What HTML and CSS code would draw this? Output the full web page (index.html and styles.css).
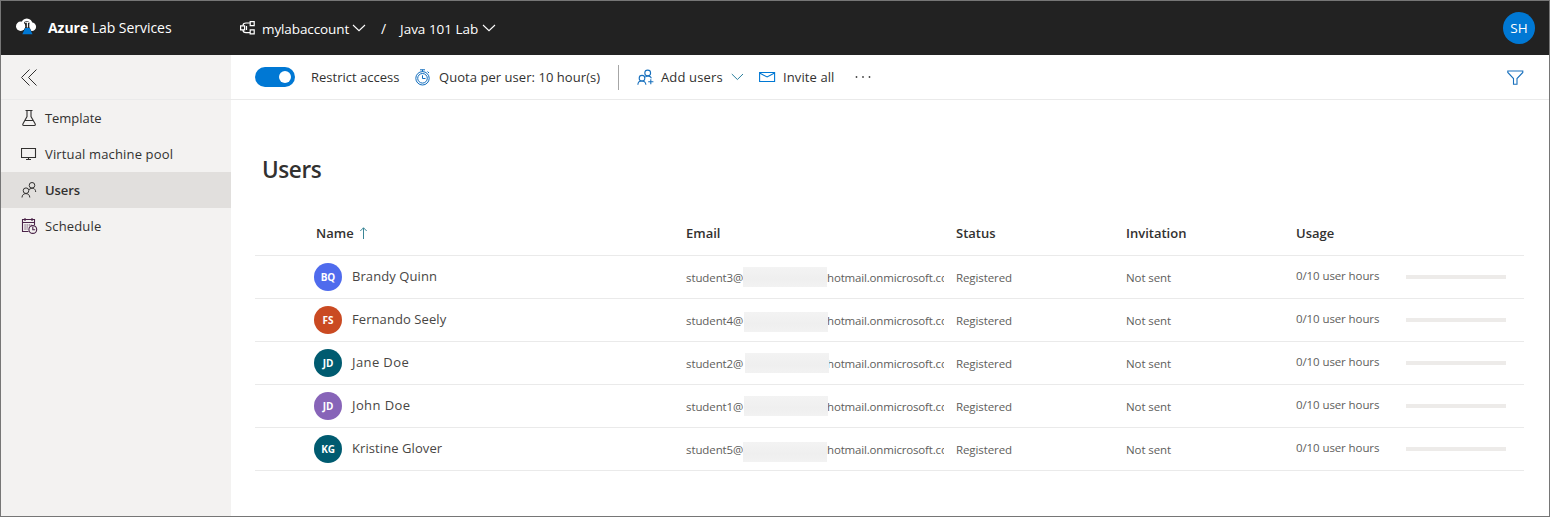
FILE: index.html
```html
<!DOCTYPE html>
<html lang="en">
<head>
<meta charset="utf-8">
<title>Azure Lab Services</title>
<link rel="stylesheet" href="styles.css">
</head>
<body>
<div class="app">
  <header class="topbar">
    <svg class="logo" width="21" height="17" viewBox="0 0 21 17">
      <circle cx="4.700" cy="8.300" r="4.700" fill="#fff"/>
      <circle cx="15.800" cy="8.800" r="4.300" fill="#fff"/>
      <path d="M6.500 6.500C6.500.2 15 .2 15.500 6.500" fill="none" stroke="#fff" stroke-width="2.600"/>
      <path d="M9.500 4.500h3.800V9l3.600 7H6l3.500-7z" fill="#222"/>
      <path d="M9 4.300h4.800M11.400 4.500v5" stroke="#fff" stroke-width="1.100" fill="none"/>
      <path d="M9.200 10h4.400l2.900 6.200H6.300z" fill="#0078d4"/>
    </svg>
    <span class="brand"><b>Azure</b> Lab Services</span>
    <svg class="account-icon" width="16" height="14" viewBox="0 0 16 14" fill="none" stroke="#fff" stroke-width="1.200">
      <path d="M.6 4.800h4v4h-4zM10.200.6h4v4h-4zM10.200 8.800h4v4h-4z"/>
      <path d="M3 4.500C3 2.600 4.500 2 6 2h4M3 9c0 1.800 1.500 2.600 3 2.600h4M6.500 5v4"/>
    </svg>
    <span class="crumb crumb-account">mylabaccount</span>
    <svg width="14" height="8" viewBox="0 0 14 8" fill="none" stroke="#fff" stroke-width="1.100"><path d="M1 1l6 5.700L13 1"/></svg>
    <span class="slash">/</span>
    <span class="crumb crumb-lab">Java 101 Lab</span>
    <svg width="14" height="8" viewBox="0 0 14 8" fill="none" stroke="#fff" stroke-width="1.100"><path d="M1 1l6 5.700L13 1"/></svg>
    <span class="me">SH</span>
  </header>

  <div class="body">
    <nav class="sidebar">
      <div class="collapse">
        <svg width="17" height="17" viewBox="0 0 17 17" fill="none" stroke="#323130" stroke-width="1"><path d="M8.500.5l-8 8 8 8M15.500.5l-8 8 8 8"/></svg>
      </div>
      <a class="nav-item">
        <svg width="16" height="18" viewBox="0 0 16 18" fill="none" stroke="#323130" stroke-width="1.100"><path d="M4.500 1.500h7M6 1.500v6L2 14.700q-.8 1.800.8 1.800h10.500q1.600 0 .8-1.800L10 7.500v-6M4.300 11.500h7.400"/></svg>
        <span class="t-template">Template</span>
      </a>
      <a class="nav-item">
        <svg width="16" height="18" viewBox="0 0 16 18" fill="none" stroke="#323130" stroke-width="1.100"><path d="M.5 3.500h14v9H.5zM7.500 12.500v2M5 14.500h5"/></svg>
        <span class="t-pool">Virtual machine pool</span>
      </a>
      <a class="nav-item selected">
        <svg width="16" height="18" viewBox="0 0 16 18" fill="none" stroke="#323130" stroke-width="1"><circle cx="11" cy="4.300" r="2.800"/><circle cx="5" cy="9.700" r="2.800"/><path d="M1 16.500c0-5.200 7.800-5.200 7.800 0M8 8.700c2.500-2.600 6.700-1.600 6.700 2.300"/></svg>
        <span class="t-users">Users</span>
      </a>
      <a class="nav-item">
        <svg width="17" height="18" viewBox="0 0 17 18" fill="none" stroke="#4a2348" stroke-width="1.100"><path d="M7.500 14.500h-6v-12h12V8M1.500 5.500h12M4 1v3M11 1v3"/><path d="M3.500 8h7M3.500 10h4M3.500 12h3" stroke-dasharray="1.100 1"/><circle cx="11.800" cy="12.500" r="3.900"/><path d="M11.800 9.800v3h2.400"/></svg>
        <span class="t-schedule">Schedule</span>
      </a>
    </nav>

    <main class="main">
      <div class="commands">
        <span class="toggle"><span class="knob"></span></span>
        <span class="c-restrict">Restrict access</span>
        <svg width="16" height="17" viewBox="0 0 16 17" fill="none" stroke="#0f6cbd" stroke-width="1"><circle cx="7.500" cy="9.300" r="6.700"/><circle cx="7.500" cy="9.300" r="4.800"/><path d="M5 .8h5M7.500.8v2M7.500 6.300v3.200h3M12.500 2.500l1.500 1.500"/></svg>
        <span class="c-quota">Quota per user: 10 hour(s)</span>
        <span class="divider"></span>
        <svg width="17" height="17" viewBox="0 0 17 17" fill="none" stroke="#1870bd" stroke-width="1.100"><circle cx="10.700" cy="4" r="2.900"/><circle cx="5" cy="9.200" r="2.800"/><path d="M.9 15.800c0-5 7.500-5 8 0M8.200 8.200c2.300-1.900 5.200-1.300 6.200 1M13.800 10.200v5M11.200 12.700h5.200"/></svg>
        <span class="c-add">Add users</span>
        <svg width="13" height="8" viewBox="0 0 13 8" fill="none" stroke="#2b7f9e" stroke-width="1"><path d="M.8 1l5.600 5.500L12 1"/></svg>
        <svg width="17" height="12" viewBox="0 0 17 12" fill="none" stroke="#0078d4" stroke-width="1.100"><path d="M.6 1.500h15v9H.6zM.6 2l7.500 4L15.600 2"/></svg>
        <span class="c-invite">Invite all</span>
        <svg class="more" width="17" height="4" viewBox="0 0 17 4" fill="#444"><circle cx="1.500" cy="2" r=".9"/><circle cx="8" cy="2" r=".9"/><circle cx="14.500" cy="2" r=".9"/></svg>
        <svg class="filter" width="17" height="15" viewBox="0 0 17 15" fill="none" stroke="#1870bd" stroke-width="1.100"><path d="M.8 1h15v1.500L10 8.500v5.700H6.500V8.500L.8 2.500z"/></svg>
      </div>

      <h1 class="title">Users</h1>

      <section class="table">
        <div class="row head">
          <span></span>
          <span class="h-name">Name <svg width="9" height="12" viewBox="0 0 9 12" fill="none" stroke="#3a8596" stroke-width="1"><path d="M4.500 12V.8M1.300 4l3.200-3.200L7.700 4"/></svg></span>
          <span class="h-email">Email</span>
          <span class="h-status">Status</span>
          <span class="h-invite">Invitation</span>
          <span class="h-usage">Usage</span>
          <span></span>
        </div>
        <div class="row">
          <span class="avatar blue">BQ</span><span class="name">Brandy Quinn</span>
          <span class="email"><span class="user">student3@</span><span class="mask m1"></span><span class="domain">hotmail.onmicrosoft.co</span></span>
          <span class="status">Registered</span><span class="invitation">Not sent</span><span class="hours">0/10 user hours</span><span class="meter"></span>
        </div>
        <div class="row">
          <span class="avatar orange">FS</span><span class="name">Fernando Seely</span>
          <span class="email"><span class="user">student4@</span><span class="mask m2"></span><span class="domain">hotmail.onmicrosoft.co</span></span>
          <span class="status">Registered</span><span class="invitation">Not sent</span><span class="hours">0/10 user hours</span><span class="meter"></span>
        </div>
        <div class="row">
          <span class="avatar teal">JD</span><span class="name jane">Jane Doe</span>
          <span class="email"><span class="user">student2@</span><span class="mask m3"></span><span class="domain">hotmail.onmicrosoft.co</span></span>
          <span class="status">Registered</span><span class="invitation">Not sent</span><span class="hours">0/10 user hours</span><span class="meter"></span>
        </div>
        <div class="row">
          <span class="avatar purple">JD</span><span class="name jane">John Doe</span>
          <span class="email"><span class="user">student1@</span><span class="mask m4"></span><span class="domain">hotmail.onmicrosoft.co</span></span>
          <span class="status">Registered</span><span class="invitation">Not sent</span><span class="hours">0/10 user hours</span><span class="meter"></span>
        </div>
        <div class="row">
          <span class="avatar teal">KG</span><span class="name">Kristine Glover</span>
          <span class="email"><span class="user">student5@</span><span class="mask m5"></span><span class="domain">hotmail.onmicrosoft.co</span></span>
          <span class="status">Registered</span><span class="invitation">Not sent</span><span class="hours">0/10 user hours</span><span class="meter"></span>
        </div>
      </section>
    </main>
  </div>
</div>
</body>
</html>
```

FILE: styles.css
```css
* { box-sizing: border-box; }
body {
  margin: 0;
  font-family: "Open Sans", "Noto Sans", sans-serif;
  font-size: 13px;
  line-height: 20px;
  color: #323130;
  background: #fff;
}
svg { display: block; }
.app {
  display: flex;
  flex-direction: column;
  width: 1550px;
  height: 517px;
  border: 1px solid #767676;
  overflow: hidden;
  white-space: nowrap;
}

/* Top bar */
.topbar {
  display: grid;
  grid-template-columns: 32px 192px 22px 90px 29px 19px 82px 14px 1fr;
  align-items: center;
  height: 54px;
  flex: none;
  padding: 0 14px 0 15px;
  background: #222;
  color: #fff;
}
.logo { margin-top: -4px; }
.brand { font-size: 14px; letter-spacing: -0.04px; }
.brand b { font-weight: 700; }
.crumb { padding-top: 1px; }
.crumb-account { font-size: 13.5px; letter-spacing: -0.1px; }
.crumb-lab { font-size: 13.5px; letter-spacing: 0; }
.slash { font-size: 14px; padding-top: 1px; }
.me {
  justify-self: end;
  width: 32px;
  height: 32px;
  border-radius: 50%;
  background: #0078d4;
  font-size: 13.5px;
  line-height: 32px;
  text-align: center;
}

.body { display: flex; flex: 1; min-height: 0; }

/* Side navigation */
.sidebar { width: 230px; flex: none; background: #f3f2f1; }
.collapse {
  display: flex;
  align-items: center;
  height: 45px;
  padding-left: 20px;
  border-bottom: 1px solid #eaeaea;
}
.nav-item {
  display: grid;
  grid-template-columns: 24px 1fr;
  align-items: center;
  height: 36px;
  padding-left: 20px;
}
.t-template { letter-spacing: -0.05px; }
.t-pool { letter-spacing: 0.15px; }
.t-users { letter-spacing: -0.1px; }
.t-schedule { letter-spacing: 0.15px; }
.selected { background: #e1dfdd; font-weight: 600; }

/* Command bar */
.main { flex: 1; min-width: 0; }
.commands {
  display: grid;
  grid-template-columns: 56px 104px 24px 179px 19px 24px 70px 28px 24px 72px 1fr 17px;
  align-items: center;
  height: 45px;
  padding: 0 25px 0 24px;
  border-bottom: 1px solid #eaeaea;
}
.c-quota { letter-spacing: 0.05px; }
.c-add { letter-spacing: 0.15px; }
.c-invite { letter-spacing: 0.1px; }
.more { margin-top: -1px; }
.toggle {
  display: flex;
  align-items: center;
  justify-content: flex-end;
  width: 40px;
  height: 20px;
  padding-right: 4px;
  border-radius: 10px;
  background: #0078d4;
}
.knob { width: 12px; height: 12px; border-radius: 50%; background: #fff; }
.divider { width: 1px; height: 25px; background: #a6a6a6; }

.title {
  margin: 54px 0 0 31px;
  font-size: 22.5px;
  font-weight: 600;
  letter-spacing: -0.4px;
  line-height: 31px;
}

/* User list */
.table { width: 1269px; margin: 26px 0 0 24px; }
.row {
  display: grid;
  grid-template-columns: 97px 334px 270px 170px 170px 110px 100px;
  align-items: center;
  height: 43px;
  border-bottom: 1px solid #eaeaea;
  font-size: 11.5px;
  letter-spacing: -0.1px;
  color: #605e5c;
}
.head {
  grid-template-columns: 61px 370px 270px 170px 170px 110px 100px;
  height: 45px;
  font-size: 13px;
  font-weight: 600;
  letter-spacing: 0;
  color: #323130;
}
.h-name { display: flex; align-items: center; gap: 5px; }
.avatar {
  width: 28px;
  height: 28px;
  margin-left: 59px;
  border-radius: 50%;
  color: #fff;
  font-size: 10px;
  font-weight: 700;
  line-height: 29px;
  text-align: center;
}
.blue { background: #4f6bed; }
.orange { background: #ca4a22; }
.teal { background: #005b70; }
.purple { background: #8764b8; }
.name { font-size: 13px; letter-spacing: 0.08px; color: #484644; padding-bottom: 2px; }
.jane { letter-spacing: 0.4px; }
.email { display: flex; align-items: center; width: 258px; overflow: hidden; height: 42px; padding-top: 1px; }
.user { width: 57px; flex: none; }
.domain { letter-spacing: -0.17px; }
.status, .invitation { padding-top: 1px; }
.mask { width: 84px; height: 20px; flex: none; margin-top: -1px; background: linear-gradient(#f3f3f3, #efefef 60%, #f2f2f2); }
.m2 { transform: translate(1px, 2px); }
.m3 { transform: translate(2px, 0); }
.m4 { transform: translate(1px, 0); }
.m5 { transform: translate(0, 3px); }
.hours { padding-bottom: 3px; }
.meter { height: 4px; background: #edebe9; }
```
